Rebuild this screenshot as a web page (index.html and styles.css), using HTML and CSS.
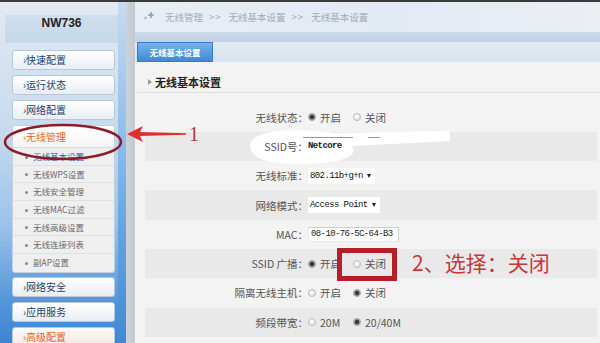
FILE: index.html
```html
<!DOCTYPE html>
<html lang="zh-CN">
<head>
<meta charset="utf-8">
<title>NW736 无线基本设置</title>
<link rel="stylesheet" href="styles.css">
</head>
<body>
<div class="topline"></div>
<div class="frame">
  <aside class="sidebar">
    <div class="brand">NW736</div>
    <nav class="menu">
      <div class="btn first">›快速配置</div>
      <div class="btn">›运行状态</div>
      <div class="btn">›网络配置</div>
      <div class="group">
        <div class="group-head">›无线管理</div>
        <ul class="sub">
          <li class="active">无线基本设置</li>
          <li>无线WPS设置</li>
          <li>无线安全管理</li>
          <li>无线MAC过滤</li>
          <li>无线高级设置</li>
          <li>无线连接列表</li>
          <li>副AP设置</li>
        </ul>
      </div>
      <div class="btn after-group">›网络安全</div>
      <div class="btn">›应用服务</div>
      <div class="btn orange">›高级配置</div>
    </nav>
  </aside>
  <div class="stripe-blue"></div>
  <div class="stripe-gray"></div>
  <main class="main">
    <div class="crumbs">
      <svg class="crumb-icon" width="14" height="12" viewBox="0 0 14 12">
        <circle cx="2.5" cy="8" r="1.6" fill="#b5c2d0"/>
        <path d="M8 2v6M5 5h6" stroke="#8a9db3" stroke-width="1.6"/>
      </svg>
      <span>无线管理<b class="sep">&gt;&gt;</b>无线基本设置<b class="sep">&gt;&gt;</b>无线基本设置</span>
    </div>
    <div class="band"></div>
    <div class="tabs"><div class="tab">无线基本设置</div></div>
    <section class="panel">
      <h2 class="sec-title">无线基本设置</h2>
      <div class="form">
        <div class="row">
          <div class="lbl">无线状态：</div>
          <div class="val">
            <span class="opt"><i class="radio on"></i>开启</span>
            <span class="opt"><i class="radio"></i>关闭</span>
          </div>
        </div>
        <div class="row">
          <div class="lbl">SSID号：</div>
          <div class="val"><span class="mono bold">Netcore</span></div>
        </div>
        <div class="row">
          <div class="lbl">无线标准：</div>
          <div class="val"><span class="sel">802.11b+g+n<i class="caret"></i></span></div>
        </div>
        <div class="row">
          <div class="lbl">网络模式：</div>
          <div class="val"><span class="sel">Access Point<i class="caret"></i></span></div>
        </div>
        <div class="row">
          <div class="lbl">MAC：</div>
          <div class="val"><span class="input">08-10-76-5C-64-B3</span></div>
        </div>
        <div class="row">
          <div class="lbl">SSID 广播：</div>
          <div class="val">
            <span class="opt"><i class="radio on"></i>开启</span>
            <span class="opt"><i class="radio"></i>关闭</span>
          </div>
        </div>
        <div class="row">
          <div class="lbl">隔离无线主机：</div>
          <div class="val">
            <span class="opt"><i class="radio"></i>开启</span>
            <span class="opt"><i class="radio on"></i>关闭</span>
          </div>
        </div>
        <div class="row">
          <div class="lbl">频段带宽：</div>
          <div class="val">
            <span class="opt"><i class="radio"></i>20M</span>
            <span class="opt"><i class="radio on"></i>20/40M</span>
          </div>
        </div>
      </div>
    </section>
  </main>
</div>

<svg class="blob" width="600" height="343" viewBox="0 0 600 343">
  <path d="M250 146 C250 128 300 128 335 133 L450 131 L450 141 L352 146 C360 158 335 164 300 164 C265 164 250 158 250 146 Z" fill="#ffffff"/>
  <line x1="303" y1="137.5" x2="353" y2="137.5" stroke="#9a9a9a" stroke-width="1"/>
  <line x1="368" y1="137.5" x2="380" y2="137.5" stroke="#9a9a9a" stroke-width="1"/>
</svg>
<svg class="marks" width="600" height="343" viewBox="0 0 600 343">
  <ellipse cx="63" cy="142" rx="58" ry="17" fill="none" stroke="#8e1c28" stroke-width="2.5"/>
  <polygon points="127,134 143,126 140,132 186,133.2 186,134.8 140,136 143,142" fill="#e0302e"/>
</svg>
<div class="note1">1</div>
<div class="redbox"></div>
<div class="note2">2、选择：关闭</div>
</body>
</html>
```
FILE: styles.css
```css
* { box-sizing: border-box; margin: 0; padding: 0; }
html, body { width: 600px; height: 343px; overflow: hidden; }
body {
  position: relative;
  font-family: "Noto Sans CJK SC", "Noto Sans", sans-serif;
  background: #f3f3f3;
}
.topline { height: 2px; background: #3b3b3b; }
.frame { display: flex; height: 341px; }

/* sidebar */
.sidebar {
  width: 118px;
  padding: 0 3px 0 12px;
  background: linear-gradient(#e1eaf3 0%, #c9dcef 35%, #9cc3ea 65%, #4e92d8 90%, #3d84d2 100%);
}
.brand {
  margin: 13px -3px 0 -7px;
  height: 28px;
  background: linear-gradient(#cfdeec, #c7d8ea);
  text-align: center;
  font: bold 12px/16px "Liberation Sans", sans-serif;
  color: #222;
}
.btn {
  height: 20px;
  margin-top: 5px;
  border: 1px solid #b7c8da;
  border-radius: 3px;
  background: linear-gradient(#ffffff, #e8eef5);
  font-size: 10px;
  line-height: 18px;
  color: #21446e;
  padding-left: 10px;
}
.btn.first { margin-top: 7px; }
.btn.after-group { margin-top: 4px; }
.btn.orange { color: #e5622c; background: linear-gradient(#fffaf7, #f2e9e6); }
.group {
  margin-top: 5px;
  background: #efefef;
  border: 1px solid #c3d0dd;
  border-radius: 3px;
  overflow: hidden;
}
.group-head {
  height: 22px;
  line-height: 21px;
  font-size: 10px;
  color: #e8671c;
  padding-left: 10px;
  background: linear-gradient(#ffffff, #f4f4f4);
  border-bottom: 1px solid #dcdcdc;
}
.sub { list-style: none; }
.sub li {
  position: relative;
  height: 17.7px;
  line-height: 17px;
  font-size: 8.5px;
  color: #6a6a6a;
  padding-left: 20px;
  border-bottom: 1px solid #e0e0e0;
}
.sub li:last-child { border-bottom: none; }
.sub li::before {
  content: "";
  position: absolute;
  left: 12px;
  top: 7.5px;
  width: 3px;
  height: 3px;
  border-radius: 50%;
  background: #8a8a8a;
}
.sub li.active { color: #3a62a8; }

.stripe-blue {
  width: 8px;
  background: linear-gradient(#c6dcf0, #8fbde9 40%, #5ea2e2 70%, #3f8ad6);
}
.stripe-gray {
  width: 9px;
  background: linear-gradient(90deg, #cdd2d8, #c4c9cf);
}

/* main */
.main { flex: 1; display: flex; flex-direction: column; background: #f3f3f3; }
.crumbs {
  height: 30px;
  display: flex;
  align-items: center;
  gap: 8px;
  padding-left: 8px;
  background: linear-gradient(90deg, #e8eef5, #e2eaf4 55%, #ebeff4);
  font-size: 9.5px;
  color: #a2abb6;
}
.sep { font-weight: normal; margin: 0 7px 0 6px; letter-spacing: 1px; }
.crumb-icon { flex: none; margin-top: -3px; }
.band { height: 10px; background: linear-gradient(#ccdae8, #c0d1e3); }
.tabs {
  height: 20px;
  display: flex;
  padding-left: 2px;
  background: linear-gradient(#e3ebf4, #d8e3ee);
}
.tab {
  width: 76px;
  border: 1px solid #3b7bc4;
  background: linear-gradient(#73b4ec, #3f89d5);
  color: #fff;
  font-size: 8.5px;
  font-weight: bold;
  line-height: 18px;
  text-align: center;
}
.panel { flex: 1; background: #f3f3f3; }
.sec-title {
  position: relative;
  height: 31px;
  padding: 10px 0 0 18px;
  margin-left: 2px;
  border-bottom: 1px solid #dedede;
  font-size: 11px;
  line-height: 20px;
  font-weight: bold;
  color: #222;
}
.sec-title::before {
  content: "";
  position: absolute;
  left: 11px;
  top: 17px;
  border-left: 4px solid #9a9a9a;
  border-top: 3px solid transparent;
  border-bottom: 3px solid transparent;
}
.form { margin: 9.5px 3px 0 10px; }
.row { height: 29.3px; display: flex; align-items: center; }
.row:nth-child(even) { background: #e9e9e9; }
.lbl {
  position: relative;
  z-index: 2;
  width: 163px;
  text-align: right;
  font-size: 10.5px;
  color: #555;
}
.val {
  position: relative;
  z-index: 2;
  display: flex;
  align-items: center;
  font-size: 10.5px;
  color: #555;
}
.opt { display: flex; align-items: center; width: 45px; }
.radio {
  flex: none;
  width: 8px;
  height: 8px;
  margin-right: 4px;
  border-radius: 50%;
  border: 1px solid #b8b8b8;
  background: radial-gradient(circle at 40% 40%, #ffffff, #dcdcdc);
}
.radio.on {
  border-color: #a0a0a0;
  background: radial-gradient(circle, #3a3a3a 0 1.8px, #8d8d8d 2.6px, #e2e2e2 3.6px);
}
.mono {
  font-family: "Liberation Mono", monospace;
  font-size: 9px;
  letter-spacing: -0.6px;
  color: #222;
}
.bold { font-weight: bold; }
.sel {
  display: flex;
  align-items: center;
  gap: 4px;
  height: 16px;
  padding: 0 4px 0 2px;
  background: #fff;
  font-family: "Liberation Mono", monospace;
  font-size: 9px;
  letter-spacing: -0.6px;
  color: #111;
}
.caret {
  border-top: 4px solid #222;
  border-left: 2.5px solid transparent;
  border-right: 2.5px solid transparent;
}
.input {
  display: block;
  width: 91px;
  height: 15px;
  padding-left: 2px;
  border: 1px solid #cfcfcf;
  border-left-color: #e8e8e8;
  border-bottom-color: #e8e8e8;
  background: #fff;
  font-family: "Liberation Mono", monospace;
  font-size: 9px;
  line-height: 13px;
  letter-spacing: -0.6px;
  color: #222;
}

/* annotations drawn over the screenshot */
.blob { position: absolute; left: 0; top: 0; z-index: 1; pointer-events: none; }
.marks { position: absolute; left: 0; top: 0; z-index: 3; pointer-events: none; }
.note1 {
  position: absolute;
  z-index: 3;
  left: 189px;
  top: 122px;
  font: 20px/24px "Liberation Serif", serif;
  color: #b3333a;
}
.redbox {
  position: absolute;
  z-index: 3;
  left: 337px;
  top: 248px;
  width: 60px;
  height: 33px;
  border: 5px solid #b81e26;
}
.note2 {
  position: absolute;
  z-index: 3;
  left: 412px;
  top: 249px;
  font-size: 21px;
  line-height: 26px;
  color: #c6373a;
}
```
